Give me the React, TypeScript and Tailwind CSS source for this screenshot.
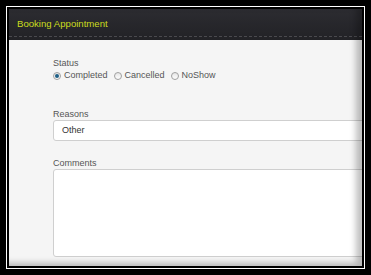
import React from 'react';

const font = { fontFamily: '"Liberation Sans", Arial, sans-serif' };

const Radio = ({ label, checked }: { label: string; checked?: boolean }) => (
  <label className="flex items-center gap-[3px] mr-[6px]">
    <span className="w-[8px] h-[8px] rounded-full border border-[#a0a0a0] bg-gradient-to-b from-[#e6e6e6] to-[#fdfdfd] flex items-center justify-center">
      {checked && <span className="w-[4px] h-[4px] rounded-full bg-[#1e5f86]" />}
    </span>
    <span>{label}</span>
  </label>
);

const App: React.FC = () => {
  return (
    <div className="w-[371px] h-[275px] bg-black p-[6px]" style={font}>
      <div className="h-full border border-white bg-black p-[2px]">
        <div className="relative h-full overflow-hidden flex flex-col">
          {/* header */}
          <div className="h-[31px] shrink-0 bg-gradient-to-b from-[#2c2c31] to-[#222226] relative">
            <div className="pl-[8px] pt-[9px] text-[9.6px] leading-[11px] text-[#cadc1e]">Booking Appointment</div>
            <div className="absolute left-0 right-0 bottom-[3px] border-t border-dashed border-[#4a4a4e]" />
          </div>

          {/* body */}
          <div className="flex-1 bg-[#f5f5f5] pl-[44px] pt-[18px] text-[9px] leading-[11px] text-[#555]">
            <div>Status</div>
            <div className="flex items-center h-[11px] mt-[1px]">
              <Radio label="Completed" checked />
              <Radio label="Cancelled" />
              <Radio label="NoShow" />
            </div>

            <div className="mt-[28px]">Reasons</div>
            <div className="w-[400px] h-[21px] bg-white border border-[#cfcfcf] rounded-[3px] flex items-center pl-[8px] text-[#333]">
              Other
            </div>

            <div className="mt-[17px]">Comments</div>
            <div className="w-[400px] h-[88px] bg-white border border-[#cfcfcf] rounded-[3px]" />
          </div>

          {/* edge shading */}
          <div className="absolute inset-0 pointer-events-none shadow-[inset_-6px_-3px_6px_rgba(0,0,0,0.25)]" />
        </div>
      </div>
    </div>
  );
};

export default App;
